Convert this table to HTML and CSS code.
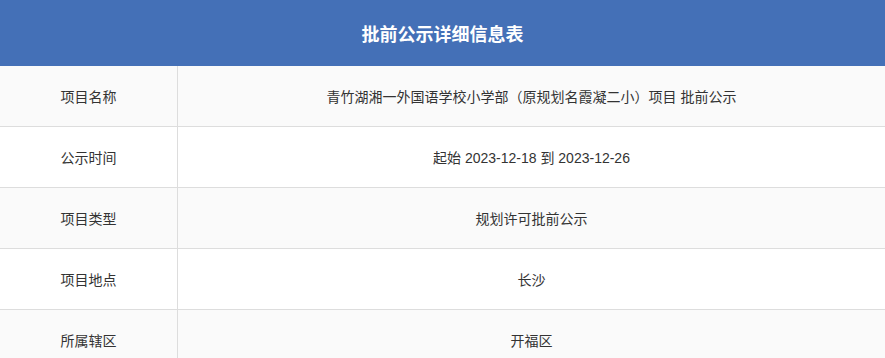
FILE: index.html
```html
<!DOCTYPE html>
<html lang="zh-CN">
<head>
<meta charset="utf-8">
<title>批前公示详细信息表</title>
<link rel="stylesheet" href="styles.css">
</head>
<body>
<div class="panel">
  <div class="panel-head">批前公示详细信息表</div>
  <table class="info">
    <tbody>
      <tr class="odd"><td class="label">项目名称</td><td class="value">青竹湖湘一外国语学校小学部（原规划名霞凝二小）项目 批前公示</td></tr>
      <tr><td class="label">公示时间</td><td class="value">起始 2023-12-18 到 2023-12-26</td></tr>
      <tr class="odd"><td class="label">项目类型</td><td class="value">规划许可批前公示</td></tr>
      <tr><td class="label">项目地点</td><td class="value">长沙</td></tr>
      <tr class="odd"><td class="label">所属辖区</td><td class="value">开福区</td></tr>
    </tbody>
  </table>
</div>
</body>
</html>
```
FILE: styles.css
```css
html, body {
  margin: 0;
  padding: 0;
  background: #ffffff;
}
body {
  font-family: "Liberation Sans", "Noto Sans CJK SC", sans-serif;
  color: #333333;
  font-size: 14px;
}
.panel {
  width: 885px;
}
.panel-head {
  height: 66px;
  background: #4470b7;
  color: #ffffff;
  font-size: 18px;
  font-weight: bold;
  display: flex;
  align-items: center;
  justify-content: center;
}
.info {
  width: 100%;
  border-collapse: collapse;
  table-layout: fixed;
}
.info td {
  height: 60px;
  padding: 0;
  text-align: center;
  vertical-align: middle;
  border-bottom: 1px solid #dddddd;
}
.info tr.odd td {
  background: #fafafa;
}
.info td.label {
  width: 177px;
  border-right: 1px solid #dddddd;
}
```
